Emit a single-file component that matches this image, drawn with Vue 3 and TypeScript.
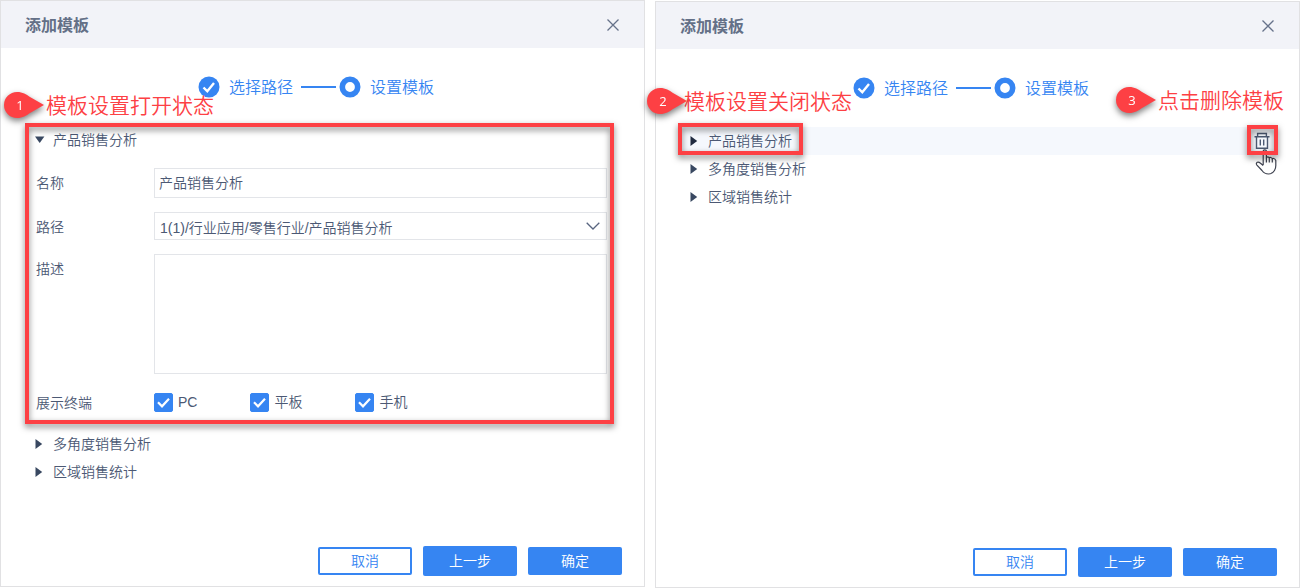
<script setup lang="ts">
import { reactive } from 'vue'

interface Terminal { key: string; label: string; checked: boolean }
interface Template {
  name: string
  path: string
  description: string
  open: boolean
  active: boolean
  terminals: Terminal[]
}
interface Note { id: number; text: string; place: string }
interface Dialog { id: string; templates: Template[]; notes: Note[] }

const createTemplate = (name: string, open = false, active = false): Template => ({
  name,
  path: `1(1)/行业应用/零售行业/${name}`,
  description: '',
  open,
  active,
  terminals: [
    { key: 'pc', label: 'PC', checked: true },
    { key: 'pad', label: '平板', checked: true },
    { key: 'phone', label: '手机', checked: true },
  ],
})

const dialogs = reactive<Dialog[]>([
  {
    id: 'opened',
    templates: [createTemplate('产品销售分析', true), createTemplate('多角度销售分析'), createTemplate('区域销售统计')],
    notes: [{ id: 1, text: '模板设置打开状态', place: 'note-open' }],
  },
  {
    id: 'closed',
    templates: [createTemplate('产品销售分析', false, true), createTemplate('多角度销售分析'), createTemplate('区域销售统计')],
    notes: [
      { id: 2, text: '模板设置关闭状态', place: 'note-closed' },
      { id: 3, text: '点击删除模板', place: 'note-delete' },
    ],
  },
])

const removeTemplate = (dialog: Dialog, index: number): void => {
  dialog.templates.splice(index, 1)
}
</script>

<template>
  <main class="page">
    <section v-for="dialog in dialogs" :key="dialog.id" class="dialog" :class="dialog.id">
      <header class="head">
        <h2 class="title">添加模板</h2>
        <button class="close" type="button" aria-label="关闭">
          <svg width="14" height="14" viewBox="0 0 14 14"><path d="M1.5 1.5 12.5 12.5M12.5 1.5 1.5 12.5" fill="none" stroke="#66728a" stroke-width="1.3" /></svg>
        </button>
      </header>

      <ol class="steps">
        <li class="step">
          <svg width="22" height="22" viewBox="0 0 22 22"><circle cx="11" cy="11" r="10.5" fill="#3685f2" /><path d="M5.5 11.5 9.3 15.3 16 7" fill="none" stroke="#fff" stroke-width="2.4" /></svg>
          <span>选择路径</span>
        </li>
        <li class="line" aria-hidden="true"></li>
        <li class="step">
          <svg width="22" height="22" viewBox="0 0 22 22"><circle cx="11" cy="11" r="7.7" fill="#fff" stroke="#3685f2" stroke-width="5.6" /></svg>
          <span>设置模板</span>
        </li>
      </ol>

      <div class="list">
        <article v-for="(item, index) in dialog.templates" :key="index" class="item" :class="{ framed: item.open }">
          <div class="row" :class="{ active: item.active }">
            <button class="toggle" :class="{ framed: item.active }" type="button" :aria-expanded="item.open" @click="item.open = !item.open">
              <svg width="10" height="12" viewBox="0 0 10 12">
                <path v-if="item.open" d="M0 2.5H9.4L4.7 9Z" fill="currentColor" />
                <path v-else d="M.5 1V11L7.2 6Z" fill="currentColor" />
              </svg>
              <span>{{ item.name }}</span>
            </button>
            <button v-if="item.active" class="remove framed" type="button" aria-label="删除" @click="removeTemplate(dialog, index)">
              <svg class="trash" width="16" height="18" viewBox="0 0 16 18">
                <path d="M0.5 4.8H15.5M3.6 4.5V1.5H12.4V4.5M2.5 5V16.2H13.5V5M6.3 7.5V13.5M9.7 7.5V13.5" fill="none" stroke="#4d5a73" stroke-width="1.4" />
              </svg>
              <svg class="hand" width="22" height="26" viewBox="0 0 22 26">
                <path d="M8.2 16V2.5Q8.2 .8 9.8 .8T11.4 2.5V9Q11.6 7.8 12.8 7.8T14.3 9.2Q14.5 8.3 15.8 8.5T17.3 10Q17.5 9.3 18.8 9.5T20.8 11.5V16.5Q20.8 19.5 19.5 21.5Q17.5 25 13.5 25Q9.5 25 7 21.5L1.7 15.8Q.8 14.2 2.2 13.2Q3.8 12.6 5.5 14.2L8.2 16.5" fill="#fff" stroke="#3f4350" stroke-width="1.2" stroke-linejoin="round" />
                <path d="M11.4 8.8V13.5M14.3 9.2V13.5M17.3 10V13.5" fill="none" stroke="#3f4350" stroke-width="1.2" />
              </svg>
            </button>
          </div>

          <form v-if="item.open" class="form" @submit.prevent>
            <label :for="`name-${dialog.id}-${index}`">名称</label>
            <input :id="`name-${dialog.id}-${index}`" v-model="item.name" class="field name" type="text">

            <label :for="`path-${dialog.id}-${index}`">路径</label>
            <div class="picker">
              <select :id="`path-${dialog.id}-${index}`" v-model="item.path" class="field">
                <option :value="item.path">{{ item.path }}</option>
              </select>
              <svg class="chevron" width="14" height="8" viewBox="0 0 14 8"><path d="M.7 .8 7 7 13.3 .8" fill="none" stroke="#596580" stroke-width="1.3" /></svg>
            </div>

            <label :for="`desc-${dialog.id}-${index}`">描述</label>
            <textarea :id="`desc-${dialog.id}-${index}`" v-model="item.description" class="field area"></textarea>

            <span :id="`term-${dialog.id}-${index}`">展示终端</span>
            <div class="terminals" role="group" :aria-labelledby="`term-${dialog.id}-${index}`">
              <label v-for="terminal in item.terminals" :key="terminal.key" class="terminal">
                <span class="tick">
                  <input v-model="terminal.checked" type="checkbox">
                  <svg v-if="terminal.checked" width="19" height="19" viewBox="0 0 19 19"><path d="M4 9.3 8 13.3 15 5.8" fill="none" stroke="#fff" stroke-width="2.2" /></svg>
                </span>
                {{ terminal.label }}
              </label>
            </div>
          </form>
        </article>
      </div>

      <footer class="actions">
        <button class="btn ghost" type="button">取消</button>
        <button class="btn tall" type="button">上一步</button>
        <button class="btn" type="button">确定</button>
      </footer>

      <aside v-for="note in dialog.notes" :key="note.id" class="note" :class="note.place">
        <span class="pin">
          <svg width="40" height="26" viewBox="0 0 40 26"><path d="M13 0C19 0 22 2.4 26 5L40 13 26 21C22 23.6 19 26 13 26A13 13 0 0 1 13 0Z" fill="#fd4044" /></svg>
          <span class="number">{{ note.id }}</span>
        </span>
        <span class="caption">{{ note.text }}</span>
      </aside>
    </section>
  </main>
</template>

<style>
body {
  margin: 0;
  background: #fff;
}
</style>

<style scoped>
* {
  box-sizing: border-box;
}

.page {
  display: grid;
  grid-template-columns: 1fr 1fr;
  gap: 10px;
  min-height: 100vh;
  font: 350 14px/20px "Liberation Sans", "Noto Sans CJK SC", sans-serif;
  color: #4c5974;
}

button,
input,
select,
textarea {
  margin: 0;
  padding: 0;
  border: 0;
  background: none;
  font: inherit;
  color: inherit;
}

svg {
  display: block;
  flex: none;
}

.dialog {
  position: relative;
  display: flex;
  flex-direction: column;
  min-width: 0;
  border: 1px solid #e1e1e3;
  background: #fff;
}

.opened {
  margin-bottom: 1px;
}

.closed {
  margin-top: 1px;
}

.head {
  display: flex;
  align-items: center;
  justify-content: space-between;
  height: 47px;
  padding: 0 24px;
  background: #f2f3f8;
}

.title {
  margin: 0;
  padding-top: 2px;
  font-size: 16px;
  line-height: 24px;
  font-weight: 700;
  color: #647087;
}

.steps {
  display: flex;
  align-items: center;
  justify-content: center;
  height: 22px;
  margin: 28px 0;
  padding: 0 13px 0 0;
  list-style: none;
  font-size: 16px;
  line-height: 22px;
  color: #3685f2;
}

.step {
  display: flex;
  align-items: center;
  gap: 9px;
}

.step span {
  padding-top: 2px;
}

.line {
  width: 35px;
  height: 2px;
  margin: 0 3px 0 8px;
  background: #3685f2;
}

.list {
  padding: 0 22px 0 24px;
}

.item {
  position: relative;
}

.row {
  display: flex;
  justify-content: space-between;
  height: 28px;
}

.row.active {
  background: #f5f8fd;
}

.toggle {
  position: relative;
  display: flex;
  align-items: center;
  gap: 8px;
  padding-left: 10px;
}

.toggle svg {
  color: #394861;
}

.active .toggle svg {
  color: #202b40;
}

.remove {
  position: relative;
  display: flex;
  align-items: center;
  justify-content: center;
  width: 30px;
}

.hand {
  position: absolute;
  left: 8px;
  top: 22px;
}

/* Highlight frames lie over the element they call out. */
.framed::after {
  content: "";
  position: absolute;
  border: 4px solid #fd4044;
  filter: drop-shadow(0 3px 3px rgba(0, 0, 0, 0.5));
  pointer-events: none;
}

.item.framed::after {
  inset: -3px 8px 6px 0;
}

.toggle.framed::after {
  inset: -4px -11px 0 -2px;
}

.remove.framed::after {
  inset: -2px -1px 0 0;
}

.form {
  display: grid;
  grid-template-columns: 118px 1fr;
  gap: 14px 0;
  padding: 14px 15px 14px 11px;
  line-height: 30px;
}

.form > label,
.form > span {
  height: 28px;
}

.field {
  display: block;
  width: 100%;
  border: 1px solid #e3e5e9;
  background: #fff;
  outline: none;
}

.name {
  height: 30px;
  padding: 0 4px;
}

.picker {
  position: relative;
}

.picker .field {
  height: 28px;
  padding: 0 28px 2px 5px;
  appearance: none;
}

.chevron {
  position: absolute;
  right: 7px;
  top: 10px;
  pointer-events: none;
}

.area {
  height: 120px;
  padding: 4px;
  line-height: 20px;
  resize: none;
}

.terminals {
  display: flex;
  gap: 53px;
  height: 28px;
}

.terminal {
  display: flex;
  align-items: center;
  gap: 5px;
}

.tick {
  position: relative;
  width: 19px;
  height: 19px;
}

.tick input {
  display: block;
  width: 19px;
  height: 19px;
  border: 1px solid #3685f2;
  border-radius: 2px;
  appearance: none;
}

.tick input:checked {
  background: #3685f2;
}

.tick svg {
  position: absolute;
  inset: 0;
  pointer-events: none;
}

.actions {
  display: flex;
  align-items: center;
  justify-content: flex-end;
  gap: 11px;
  margin-top: auto;
  padding: 0 22px 10px;
}

.btn {
  width: 94px;
  height: 28px;
  border-radius: 2px;
  background: #3685f2;
  color: #fff;
}

.btn.tall {
  height: 30px;
}

.btn.ghost {
  border: 2px solid #3685f2;
  background: #fff;
  color: #3685f2;
}

/* Callouts float over the dialogs. */
.note {
  position: absolute;
  z-index: 2;
  display: flex;
  align-items: center;
  height: 26px;
  font-size: 21px;
  line-height: 26px;
  color: #fd4044;
  white-space: nowrap;
}

.caption {
  padding: 2px 0 0 2px;
}

.note-open {
  left: 3px;
  top: 91px;
}

.note-closed {
  left: -9px;
  top: 86px;
}

.note-closed .caption {
  margin-left: -5px;
}

.note-delete {
  right: 15px;
  top: 85px;
}

.pin {
  position: relative;
  filter: drop-shadow(0 3px 3px rgba(0, 0, 0, 0.5));
}

.number {
  position: absolute;
  left: 0;
  top: 0;
  width: 32px;
  font: 13px/26px "Open Sans", sans-serif;
  text-align: center;
  color: #fff;
}
</style>
